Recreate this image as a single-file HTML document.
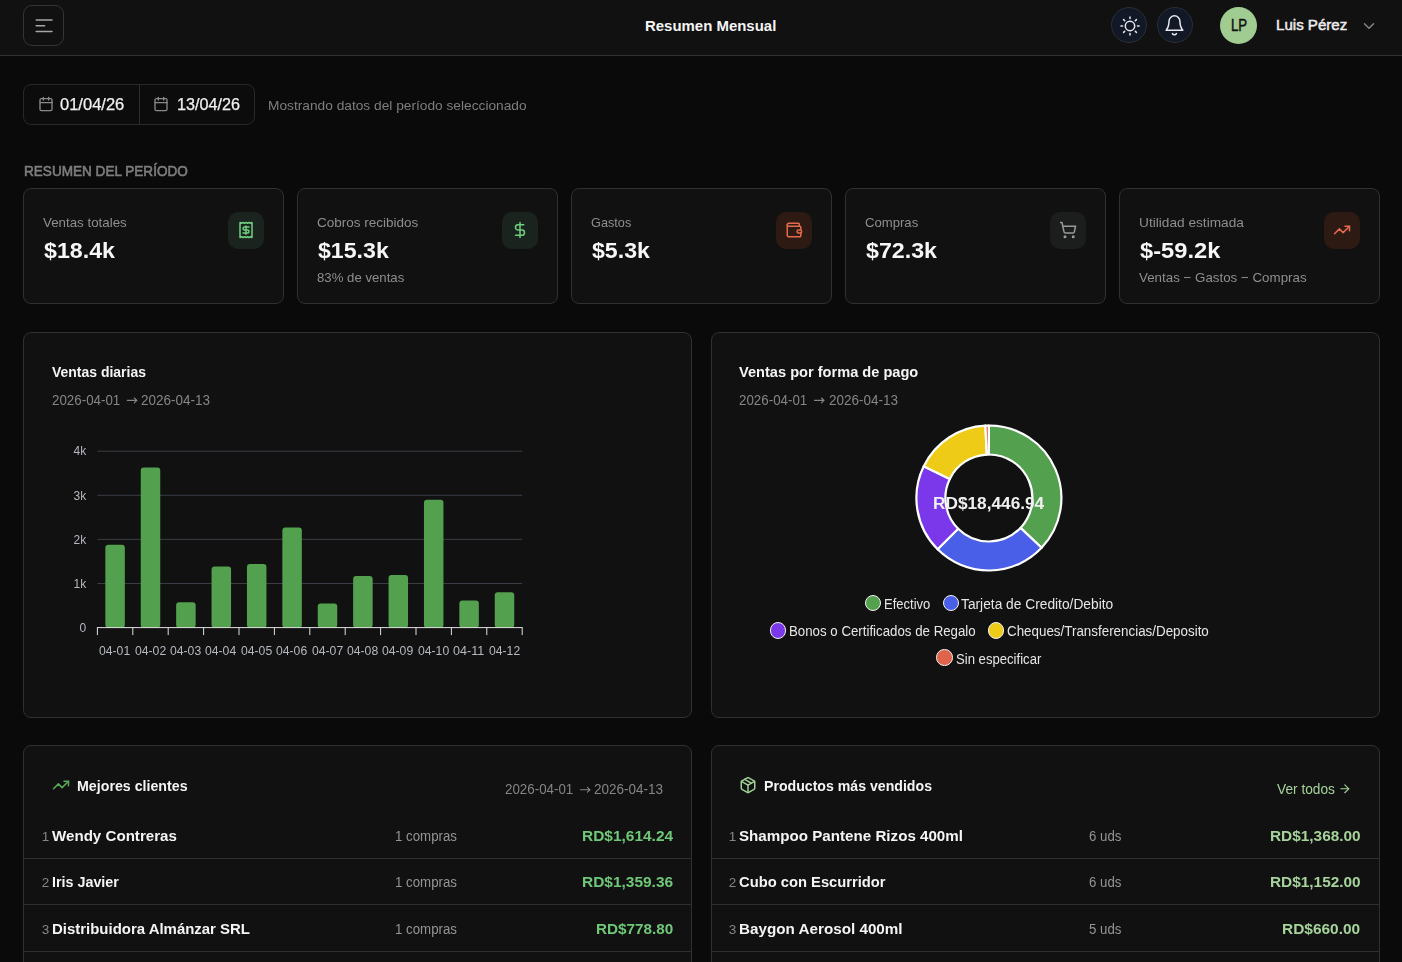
<!DOCTYPE html>
<html lang="es"><head><meta charset="utf-8"><title>Resumen Mensual</title><style>
*{box-sizing:border-box;margin:0;padding:0}
html,body{width:1402px;height:962px;overflow:hidden;background:#0a0a0a;font-family:"Liberation Sans",sans-serif}
#root{position:relative;width:1402px;height:962px;overflow:hidden;background:#0a0a0a}
.t{position:absolute;white-space:nowrap;line-height:1;transform-origin:0 0}
.abs{position:absolute}
#g{position:absolute;left:0;top:0;width:1402px;height:962px;will-change:transform}
.card{position:absolute;background:#111111;border:1px solid #2d3231;border-radius:8px}
.ib{position:absolute;width:36.3px;height:37px;border-radius:10px}
svg{position:absolute;overflow:visible}
.ic{fill:none;stroke-linecap:round;stroke-linejoin:round}
.row{position:absolute;height:1px;background:#2c2f30}
.dot{position:absolute;width:16.6px;height:16.6px;border-radius:50%;border:1px solid #f2f2f2}
</style></head><body><div id="root">
<div class="abs" style="left:0;top:0;width:1402px;height:56px;background:#111111;border-bottom:1px solid #2f3332"></div>
<div class="abs" style="left:23px;top:5px;width:41px;height:41px;border:1px solid #30363a;border-radius:9px"></div>
<svg class="ic" style="left:32px;top:14px" width="24" height="24" viewBox="0 0 24 24" stroke="#a6a6a6" stroke-width="1.5"><path d="M4.2 6H20M4.2 11.8H12.6M4.2 17.5H20"/></svg>
<div class="abs" style="left:1111px;top:7px;width:36px;height:36px;border-radius:50%;background:#131827;border:1px solid #283036"></div>
<div class="abs" style="left:1157px;top:7px;width:36px;height:36px;border-radius:50%;background:#131827;border:1px solid #283036"></div>
<svg class="ic" style="left:1109.75px;top:5.75px" width="40" height="40" viewBox="0 0 40 40" stroke="#e6e9f2" stroke-width="1.5"><circle cx="20" cy="20" r="4.7"/><path d="M27.50 20.00L29.05 20.00M25.30 25.30L26.40 26.40M20.00 27.50L20.00 29.05M14.70 25.30L13.60 26.40M12.50 20.00L10.95 20.00M14.70 14.70L13.60 13.60M20.00 12.50L20.00 10.95M25.30 14.70L26.40 13.60"/></svg>
<svg class="ic" style="left:1155px;top:5px" width="40" height="40" viewBox="0 0 40 40" stroke="#e6e9f2" stroke-width="1.5"><path d="M11.1 25.2C12.9 23.2 13.9 21.2 14.0 16.3A5.45 5.45 0 0 1 24.9 16.3C25.0 21.2 26.0 23.2 27.8 25.2Z"/><path d="M17.4 28.6A2.3 2.3 0 0 0 21.4 28.6"/></svg>
<div class="abs" style="left:1220px;top:7px;width:37px;height:37px;border-radius:50%;background:#a0cc92"></div>
<svg class="ic" style="left:1360px;top:17px" width="18" height="18" viewBox="0 0 24 24" stroke="#858585" stroke-width="2"><path d="m6 9 6 6 6-6"/></svg>
<div class="abs" style="left:23px;top:84px;width:232px;height:41px;border:1px solid #252929;border-radius:8px;background:#0c0c0c"></div>
<div class="abs" style="left:139px;top:84px;width:1px;height:41px;background:#2a2e2e"></div>
<svg class="ic" style="left:37.8px;top:96px" width="16" height="16" viewBox="0 0 24 24" stroke="#8a8a8a" stroke-width="2"><path d="M8 2v4M16 2v4"/><rect width="18" height="18" x="3" y="4" rx="2"/><path d="M3 10h18"/></svg>
<svg class="ic" style="left:152.8px;top:96px" width="16" height="16" viewBox="0 0 24 24" stroke="#8a8a8a" stroke-width="2"><path d="M8 2v4M16 2v4"/><rect width="18" height="18" x="3" y="4" rx="2"/><path d="M3 10h18"/></svg>
<div class="card" style="left:23px;top:188px;width:261px;height:116px"></div>
<div class="card" style="left:297px;top:188px;width:261px;height:116px"></div>
<div class="card" style="left:571px;top:188px;width:261px;height:116px"></div>
<div class="card" style="left:845px;top:188px;width:261px;height:116px"></div>
<div class="card" style="left:1119px;top:188px;width:261px;height:116px"></div>
<div class="ib" style="left:227.9px;top:211.9px;background:#1a231d"></div>
<div class="ib" style="left:502.0px;top:211.9px;background:#1a231d"></div>
<div class="ib" style="left:776.0px;top:211.9px;background:#2c1a13"></div>
<div class="ib" style="left:1050.0px;top:211.9px;background:#1c1e1e"></div>
<div class="ib" style="left:1323.8px;top:211.9px;background:#2c1a13"></div>
<svg class="ic" style="left:237.2px;top:221.2px" width="18" height="18" viewBox="0 0 24 24" stroke="#6fcf7f" stroke-width="2"><path d="M4 2v20l2-1 2 1 2-1 2 1 2-1 2 1 2-1 2 1V2l-2 1-2-1-2 1-2-1-2 1-2-1-2 1Z"/><path d="M16 8h-6a2 2 0 1 0 0 4h4a2 2 0 1 1 0 4H8"/><path d="M12 17.5v-11"/></svg>
<svg class="ic" style="left:511.3px;top:221.2px" width="18" height="18" viewBox="0 0 24 24" stroke="#6fcf7f" stroke-width="2"><path d="M12 2v20"/><path d="M17 5H9.5a3.5 3.5 0 0 0 0 7h5a3.5 3.5 0 0 1 0 7H6"/></svg>
<svg class="ic" style="left:785.3px;top:221.2px" width="18" height="18" viewBox="0 0 24 24" stroke="#e46a4d" stroke-width="2"><path d="M19 7V4a1 1 0 0 0-1-1H5a2 2 0 0 0 0 4h15a1 1 0 0 1 1 1v4h-3a2 2 0 0 0 0 4h3a1 1 0 0 0 1-1v-2a1 1 0 0 0-1-1"/><path d="M3 5v14a2 2 0 0 0 2 2h15a1 1 0 0 0 1-1v-4"/></svg>
<svg class="ic" style="left:1059.3px;top:221.2px" width="18" height="18" viewBox="0 0 24 24" stroke="#9a9a9a" stroke-width="2"><circle cx="8" cy="21" r="1"/><circle cx="19" cy="21" r="1"/><path d="M2.05 2.05h2l2.66 12.42a2 2 0 0 0 2 1.58h9.78a2 2 0 0 0 1.95-1.57l1.65-7.43H5.12"/></svg>
<svg class="ic" style="left:1333.1px;top:221.2px" width="18" height="18" viewBox="0 0 24 24" stroke="#e46a4d" stroke-width="2"><path d="M16 7h6v6"/><path d="m22 7-8.5 8.5-5-5L2 17"/></svg>
<div class="card" style="left:23px;top:332px;width:669px;height:386px"></div>
<div class="card" style="left:711px;top:332px;width:669px;height:386px"></div>
<svg style="left:0;top:0" width="1402" height="962" viewBox="0 0 1402 962"><line x1="97.4" x2="522.2" y1="583.50" y2="583.50" stroke="#3a3d45" stroke-width="1"/><line x1="97.4" x2="522.2" y1="539.40" y2="539.40" stroke="#3a3d45" stroke-width="1"/><line x1="97.4" x2="522.2" y1="495.30" y2="495.30" stroke="#3a3d45" stroke-width="1"/><line x1="97.4" x2="522.2" y1="451.20" y2="451.20" stroke="#3a3d45" stroke-width="1"/><rect x="105.35" y="544.82" width="19.50" height="82.98" rx="3" fill="#53a14f"/><rect x="140.75" y="467.52" width="19.50" height="160.28" rx="3" fill="#53a14f"/><rect x="176.15" y="602.20" width="19.50" height="25.60" rx="3" fill="#53a14f"/><rect x="211.55" y="566.52" width="19.50" height="61.28" rx="3" fill="#53a14f"/><rect x="246.95" y="564.10" width="19.50" height="63.70" rx="3" fill="#53a14f"/><rect x="282.35" y="527.49" width="19.50" height="100.31" rx="3" fill="#53a14f"/><rect x="317.75" y="603.39" width="19.50" height="24.41" rx="3" fill="#53a14f"/><rect x="353.15" y="576.00" width="19.50" height="51.80" rx="3" fill="#53a14f"/><rect x="388.55" y="575.12" width="19.50" height="52.68" rx="3" fill="#53a14f"/><rect x="423.95" y="499.71" width="19.50" height="128.09" rx="3" fill="#53a14f"/><rect x="459.35" y="600.39" width="19.50" height="27.41" rx="3" fill="#53a14f"/><rect x="494.75" y="592.32" width="19.50" height="35.48" rx="3" fill="#53a14f"/><line x1="96.9" x2="522.7" y1="627.60" y2="627.60" stroke="#e0e0e0" stroke-width="1"/><line x1="97.40" x2="97.40" y1="627.60" y2="635.10" stroke="#e0e0e0" stroke-width="1"/><line x1="132.80" x2="132.80" y1="627.60" y2="635.10" stroke="#e0e0e0" stroke-width="1"/><line x1="168.20" x2="168.20" y1="627.60" y2="635.10" stroke="#e0e0e0" stroke-width="1"/><line x1="203.60" x2="203.60" y1="627.60" y2="635.10" stroke="#e0e0e0" stroke-width="1"/><line x1="239.00" x2="239.00" y1="627.60" y2="635.10" stroke="#e0e0e0" stroke-width="1"/><line x1="274.40" x2="274.40" y1="627.60" y2="635.10" stroke="#e0e0e0" stroke-width="1"/><line x1="309.80" x2="309.80" y1="627.60" y2="635.10" stroke="#e0e0e0" stroke-width="1"/><line x1="345.20" x2="345.20" y1="627.60" y2="635.10" stroke="#e0e0e0" stroke-width="1"/><line x1="380.60" x2="380.60" y1="627.60" y2="635.10" stroke="#e0e0e0" stroke-width="1"/><line x1="416.00" x2="416.00" y1="627.60" y2="635.10" stroke="#e0e0e0" stroke-width="1"/><line x1="451.40" x2="451.40" y1="627.60" y2="635.10" stroke="#e0e0e0" stroke-width="1"/><line x1="486.80" x2="486.80" y1="627.60" y2="635.10" stroke="#e0e0e0" stroke-width="1"/><line x1="522.20" x2="522.20" y1="627.60" y2="635.10" stroke="#e0e0e0" stroke-width="1"/></svg>
<svg style="left:0;top:0" width="1402" height="962" viewBox="0 0 1402 962"><path d="M988.90 425.50A72.5 72.5 0 0 1 1041.58 547.81L1020.51 527.89A43.5 43.5 0 0 0 988.90 454.50Z" fill="#53a14f" stroke="#ffffff" stroke-width="2.2" stroke-linejoin="round"/><path d="M1041.58 547.81A72.5 72.5 0 0 1 937.63 549.27L958.14 528.76A43.5 43.5 0 0 0 1020.51 527.89Z" fill="#4a5fe8" stroke="#ffffff" stroke-width="2.2" stroke-linejoin="round"/><path d="M937.63 549.27A72.5 72.5 0 0 1 923.74 466.22L949.80 478.93A43.5 43.5 0 0 0 958.14 528.76Z" fill="#7a38ea" stroke="#ffffff" stroke-width="2.2" stroke-linejoin="round"/><path d="M923.74 466.22A72.5 72.5 0 0 1 985.36 425.59L986.78 454.55A43.5 43.5 0 0 0 949.80 478.93Z" fill="#eecb17" stroke="#ffffff" stroke-width="2.2" stroke-linejoin="round"/><path d="M985.36 425.59A72.5 72.5 0 0 1 988.90 425.50L988.90 454.50A43.5 43.5 0 0 0 986.78 454.55Z" fill="#e0644c" stroke="#ffffff" stroke-width="2.2" stroke-linejoin="round"/></svg>
<div class="dot" style="left:864.7px;top:594.9px;background:#53a14f"></div>
<div class="dot" style="left:942.7px;top:594.9px;background:#4a5fe8"></div>
<div class="dot" style="left:769.7px;top:622.1px;background:#7a38ea"></div>
<div class="dot" style="left:987.9px;top:622.1px;background:#eecb17"></div>
<div class="dot" style="left:936.4px;top:649.2px;background:#e0644c"></div>
<div class="card" style="left:23px;top:745px;width:669px;height:260px"></div>
<div class="card" style="left:711px;top:745px;width:669px;height:260px"></div>
<div class="row" style="left:24px;top:858px;width:667px"></div>
<div class="row" style="left:712px;top:858px;width:667px"></div>
<div class="row" style="left:24px;top:904px;width:667px"></div>
<div class="row" style="left:712px;top:904px;width:667px"></div>
<div class="row" style="left:24px;top:951px;width:667px"></div>
<div class="row" style="left:712px;top:951px;width:667px"></div>
<svg class="ic" style="left:51.5px;top:776px" width="18" height="18" viewBox="0 0 24 24" stroke="#58a857" stroke-width="2"><path d="M16 7h6v6"/><path d="m22 7-8.5 8.5-5-5L2 17"/></svg>
<svg class="ic" style="left:739px;top:776.2px" width="18" height="18.2" viewBox="0 0 24 24" stroke="#9fd093" stroke-width="2"><path d="M11 21.73a2 2 0 0 0 2 0l7-4A2 2 0 0 0 21 16V8a2 2 0 0 0-1-1.73l-7-4a2 2 0 0 0-2 0l-7 4A2 2 0 0 0 3 8v8a2 2 0 0 0 1 1.73z"/><path d="M12 22V12"/><path d="M3.29 7 12 12l8.71-5"/><path d="m7.5 4.27 9 5.15"/></svg>
<svg class="ic" style="left:1337.8px;top:781.8px" width="13.6" height="13.6" viewBox="0 0 24 24" stroke="#a5d39a" stroke-width="2"><path d="M5 12h14"/><path d="m12 5 7 7-7 7"/></svg>
<span class="t" style="left:644.80px;top:18.00px;font-size:15px;font-weight:700;color:#f5f5f5;transform:scaleX(0.9968)">Resumen Mensual</span>
<span class="t" style="left:1230.60px;top:17.80px;font-size:15.6px;font-weight:400;color:#111111;transform:scaleX(0.8491);-webkit-text-stroke:0.45px #111111">LP</span>
<span class="t" style="left:1275.70px;top:17.40px;font-size:15px;font-weight:400;color:#ececec;transform:scaleX(1.0060);-webkit-text-stroke:0.5px #ececec">Luis Pérez</span>
<div id="g">
<span class="t" style="left:60.40px;top:96.60px;font-size:15.8px;font-weight:400;color:#f0f0f0;transform:scaleX(1.0455);-webkit-text-stroke:0.25px #f0f0f0">01/04/26</span>
<span class="t" style="left:176.80px;top:96.60px;font-size:15.8px;font-weight:400;color:#f0f0f0;transform:scaleX(1.0244);-webkit-text-stroke:0.25px #f0f0f0">13/04/26</span>
<span class="t" style="left:268.40px;top:98.60px;font-size:13.5px;font-weight:400;color:#7e7e7e;transform:scaleX(1.0164)">Mostrando datos del período seleccionado</span>
<span class="t" style="left:23.90px;top:164.00px;font-size:14.4px;font-weight:400;color:#7e7e7e;transform:scaleX(0.9425);-webkit-text-stroke:0.6px #7e7e7e">RESUMEN DEL PERÍODO</span>
<span class="t" style="left:43.00px;top:215.90px;font-size:13.5px;font-weight:400;color:#8e8e8e;transform:scaleX(0.9869)">Ventas totales</span>
<span class="t" style="left:43.50px;top:240.60px;font-size:21.5px;font-weight:700;color:#f7f7f7;transform:scaleX(1.0796)">$18.4k</span>
<span class="t" style="left:317.00px;top:215.90px;font-size:13.5px;font-weight:400;color:#8e8e8e">Cobros recibidos</span>
<span class="t" style="left:317.50px;top:240.60px;font-size:21.5px;font-weight:700;color:#f7f7f7;transform:scaleX(1.0766)">$15.3k</span>
<span class="t" style="left:317.00px;top:270.90px;font-size:13.5px;font-weight:400;color:#8e8e8e;transform:scaleX(0.9775)">83% de ventas</span>
<span class="t" style="left:591.00px;top:215.90px;font-size:13.5px;font-weight:400;color:#8e8e8e;transform:scaleX(0.9420)">Gastos</span>
<span class="t" style="left:591.50px;top:240.60px;font-size:21.5px;font-weight:700;color:#f7f7f7;transform:scaleX(1.0760)">$5.3k</span>
<span class="t" style="left:865.00px;top:215.90px;font-size:13.5px;font-weight:400;color:#8e8e8e;transform:scaleX(0.9714)">Compras</span>
<span class="t" style="left:865.50px;top:240.60px;font-size:21.5px;font-weight:700;color:#f7f7f7;transform:scaleX(1.0796)">$72.3k</span>
<span class="t" style="left:1139.00px;top:215.90px;font-size:13.5px;font-weight:400;color:#8e8e8e;transform:scaleX(1.0129)">Utilidad estimada</span>
<span class="t" style="left:1139.50px;top:240.60px;font-size:21.5px;font-weight:700;color:#f7f7f7;transform:scaleX(1.1012)">$-59.2k</span>
<span class="t" style="left:1139.00px;top:270.90px;font-size:13.5px;font-weight:400;color:#8e8e8e;transform:scaleX(0.9882)">Ventas − Gastos − Compras</span>
<span class="t" style="left:52.10px;top:364.20px;font-size:15.5px;font-weight:700;color:#f5f5f5;transform:scaleX(0.9015)">Ventas diarias</span>
<span class="t" style="left:52.10px;top:393.00px;font-size:14px;font-weight:400;color:#858585;transform:scaleX(0.9536)">2026-04-01</span>
<span class="t" style="left:141.30px;top:393.00px;font-size:14px;font-weight:400;color:#858585;transform:scaleX(0.9647)">2026-04-13</span>
<span class="t" style="left:739.30px;top:364.20px;font-size:15.5px;font-weight:700;color:#f5f5f5;transform:scaleX(0.9419)">Ventas por forma de pago</span>
<span class="t" style="left:739.30px;top:393.00px;font-size:14px;font-weight:400;color:#858585;transform:scaleX(0.9536)">2026-04-01</span>
<span class="t" style="left:828.50px;top:393.00px;font-size:14px;font-weight:400;color:#858585;transform:scaleX(0.9647)">2026-04-13</span>
<span class="t" style="left:73.61px;top:444.90px;font-size:12px;font-weight:400;color:#b5b8c0">4k</span>
<span class="t" style="left:73.61px;top:489.90px;font-size:12px;font-weight:400;color:#b5b8c0">3k</span>
<span class="t" style="left:73.61px;top:533.70px;font-size:12px;font-weight:400;color:#b5b8c0">2k</span>
<span class="t" style="left:73.61px;top:577.90px;font-size:12px;font-weight:400;color:#b5b8c0">1k</span>
<span class="t" style="left:79.61px;top:622.00px;font-size:12px;font-weight:400;color:#b5b8c0">0</span>
<span class="t" style="left:99.20px;top:645.00px;font-size:12px;font-weight:400;color:#b5b8c0;transform:scaleX(1.0162)">04-01</span>
<span class="t" style="left:134.60px;top:645.00px;font-size:12px;font-weight:400;color:#b5b8c0;transform:scaleX(1.0162)">04-02</span>
<span class="t" style="left:170.00px;top:645.00px;font-size:12px;font-weight:400;color:#b5b8c0;transform:scaleX(1.0162)">04-03</span>
<span class="t" style="left:205.40px;top:645.00px;font-size:12px;font-weight:400;color:#b5b8c0;transform:scaleX(1.0162)">04-04</span>
<span class="t" style="left:240.80px;top:645.00px;font-size:12px;font-weight:400;color:#b5b8c0;transform:scaleX(1.0162)">04-05</span>
<span class="t" style="left:276.20px;top:645.00px;font-size:12px;font-weight:400;color:#b5b8c0;transform:scaleX(1.0162)">04-06</span>
<span class="t" style="left:311.60px;top:645.00px;font-size:12px;font-weight:400;color:#b5b8c0;transform:scaleX(1.0162)">04-07</span>
<span class="t" style="left:347.00px;top:645.00px;font-size:12px;font-weight:400;color:#b5b8c0;transform:scaleX(1.0162)">04-08</span>
<span class="t" style="left:382.40px;top:645.00px;font-size:12px;font-weight:400;color:#b5b8c0;transform:scaleX(1.0162)">04-09</span>
<span class="t" style="left:417.80px;top:645.00px;font-size:12px;font-weight:400;color:#b5b8c0;transform:scaleX(1.0162)">04-10</span>
<span class="t" style="left:453.20px;top:645.00px;font-size:12px;font-weight:400;color:#b5b8c0;transform:scaleX(1.0465)">04-11</span>
<span class="t" style="left:488.60px;top:645.00px;font-size:12px;font-weight:400;color:#b5b8c0;transform:scaleX(1.0162)">04-12</span>
<span class="t" style="left:933.30px;top:495.60px;font-size:16px;font-weight:700;color:#f0f0f0;transform:scaleX(1.0776)">RD$18,446.94</span>
<span class="t" style="left:883.70px;top:597.10px;font-size:14px;font-weight:400;color:#e6e6e6;transform:scaleX(0.9295)">Efectivo</span>
<span class="t" style="left:961.10px;top:597.10px;font-size:14px;font-weight:400;color:#e6e6e6;transform:scaleX(0.9827)">Tarjeta de Credito/Debito</span>
<span class="t" style="left:788.90px;top:624.10px;font-size:14px;font-weight:400;color:#e6e6e6;transform:scaleX(0.9482)">Bonos o Certificados de Regalo</span>
<span class="t" style="left:1006.70px;top:624.10px;font-size:14px;font-weight:400;color:#e6e6e6;transform:scaleX(0.9557)">Cheques/Transferencias/Deposito</span>
<span class="t" style="left:955.90px;top:651.90px;font-size:14px;font-weight:400;color:#e6e6e6;transform:scaleX(0.9369)">Sin especificar</span>
<span class="t" style="left:76.90px;top:778.40px;font-size:15.5px;font-weight:700;color:#f5f5f5;transform:scaleX(0.9170)">Mejores clientes</span>
<span class="t" style="left:505.20px;top:782.40px;font-size:14px;font-weight:400;color:#858585;transform:scaleX(0.9536)">2026-04-01</span>
<span class="t" style="left:594.40px;top:782.40px;font-size:14px;font-weight:400;color:#858585;transform:scaleX(0.9647)">2026-04-13</span>
<span class="t" style="left:764.40px;top:778.40px;font-size:15.5px;font-weight:700;color:#f5f5f5;transform:scaleX(0.9114)">Productos más vendidos</span>
<span class="t" style="left:1277.40px;top:782.40px;font-size:14px;font-weight:400;color:#a5d39a;transform:scaleX(0.9788)">Ver todos</span>
<span class="t" style="left:41.68px;top:829.80px;font-size:13.5px;font-weight:400;color:#858585">1</span>
<span class="t" style="left:51.90px;top:827.80px;font-size:15.5px;font-weight:700;color:#f5f5f5;transform:scaleX(0.9753)">Wendy Contreras</span>
<span class="t" style="left:395.20px;top:828.60px;font-size:14px;font-weight:400;color:#949494;transform:scaleX(0.9486)">1 compras</span>
<span class="t" style="left:582.40px;top:827.80px;font-size:15.5px;font-weight:700;color:#6fc878;transform:scaleX(0.9973)">RD$1,614.24</span>
<span class="t" style="left:41.68px;top:875.80px;font-size:13.5px;font-weight:400;color:#858585">2</span>
<span class="t" style="left:51.90px;top:873.80px;font-size:15.5px;font-weight:700;color:#f5f5f5;transform:scaleX(0.9240)">Iris Javier</span>
<span class="t" style="left:395.20px;top:874.60px;font-size:14px;font-weight:400;color:#949494;transform:scaleX(0.9486)">1 compras</span>
<span class="t" style="left:582.40px;top:873.80px;font-size:15.5px;font-weight:700;color:#6fc878;transform:scaleX(0.9973)">RD$1,359.36</span>
<span class="t" style="left:41.68px;top:922.80px;font-size:13.5px;font-weight:400;color:#858585">3</span>
<span class="t" style="left:51.90px;top:920.80px;font-size:15.5px;font-weight:700;color:#f5f5f5;transform:scaleX(0.9646)">Distribuidora Almánzar SRL</span>
<span class="t" style="left:395.20px;top:921.60px;font-size:14px;font-weight:400;color:#949494;transform:scaleX(0.9486)">1 compras</span>
<span class="t" style="left:596.20px;top:920.80px;font-size:15.5px;font-weight:700;color:#6fc878;transform:scaleX(0.9857)">RD$778.80</span>
<span class="t" style="left:728.68px;top:829.80px;font-size:13.5px;font-weight:400;color:#858585">1</span>
<span class="t" style="left:738.90px;top:827.80px;font-size:15.5px;font-weight:700;color:#f5f5f5;transform:scaleX(0.9776)">Shampoo Pantene Rizos 400ml</span>
<span class="t" style="left:1088.70px;top:828.60px;font-size:14px;font-weight:400;color:#949494;transform:scaleX(0.9460)">6 uds</span>
<span class="t" style="left:1269.70px;top:827.80px;font-size:15.5px;font-weight:700;color:#a5d39a;transform:scaleX(0.9919)">RD$1,368.00</span>
<span class="t" style="left:728.68px;top:875.80px;font-size:13.5px;font-weight:400;color:#858585">2</span>
<span class="t" style="left:738.90px;top:873.80px;font-size:15.5px;font-weight:700;color:#f5f5f5;transform:scaleX(0.9510)">Cubo con Escurridor</span>
<span class="t" style="left:1088.70px;top:874.60px;font-size:14px;font-weight:400;color:#949494;transform:scaleX(0.9460)">6 uds</span>
<span class="t" style="left:1269.70px;top:873.80px;font-size:15.5px;font-weight:700;color:#a5d39a;transform:scaleX(0.9919)">RD$1,152.00</span>
<span class="t" style="left:728.68px;top:922.80px;font-size:13.5px;font-weight:400;color:#858585">3</span>
<span class="t" style="left:738.90px;top:920.80px;font-size:15.5px;font-weight:700;color:#f5f5f5;transform:scaleX(0.9823)">Baygon Aerosol 400ml</span>
<span class="t" style="left:1088.70px;top:921.60px;font-size:14px;font-weight:400;color:#949494;transform:scaleX(0.9460)">5 uds</span>
<span class="t" style="left:1282.20px;top:920.80px;font-size:15.5px;font-weight:700;color:#a5d39a;transform:scaleX(0.9959)">RD$660.00</span>
<svg class="ic" style="left:0;top:0" width="1402" height="962" viewBox="0 0 1402 962" stroke="#858585" stroke-width="1.1"><path d="M127.30 400.40H136.90M134.30 398.00L136.90 400.40L134.30 402.80"/></svg>
<svg class="ic" style="left:0;top:0" width="1402" height="962" viewBox="0 0 1402 962" stroke="#858585" stroke-width="1.1"><path d="M814.50 400.40H824.10M821.50 398.00L824.10 400.40L821.50 402.80"/></svg>
<svg class="ic" style="left:0;top:0" width="1402" height="962" viewBox="0 0 1402 962" stroke="#858585" stroke-width="1.1"><path d="M580.40 789.80H590.00M587.40 787.40L590.00 789.80L587.40 792.20"/></svg>
</div>
</div></body></html>
